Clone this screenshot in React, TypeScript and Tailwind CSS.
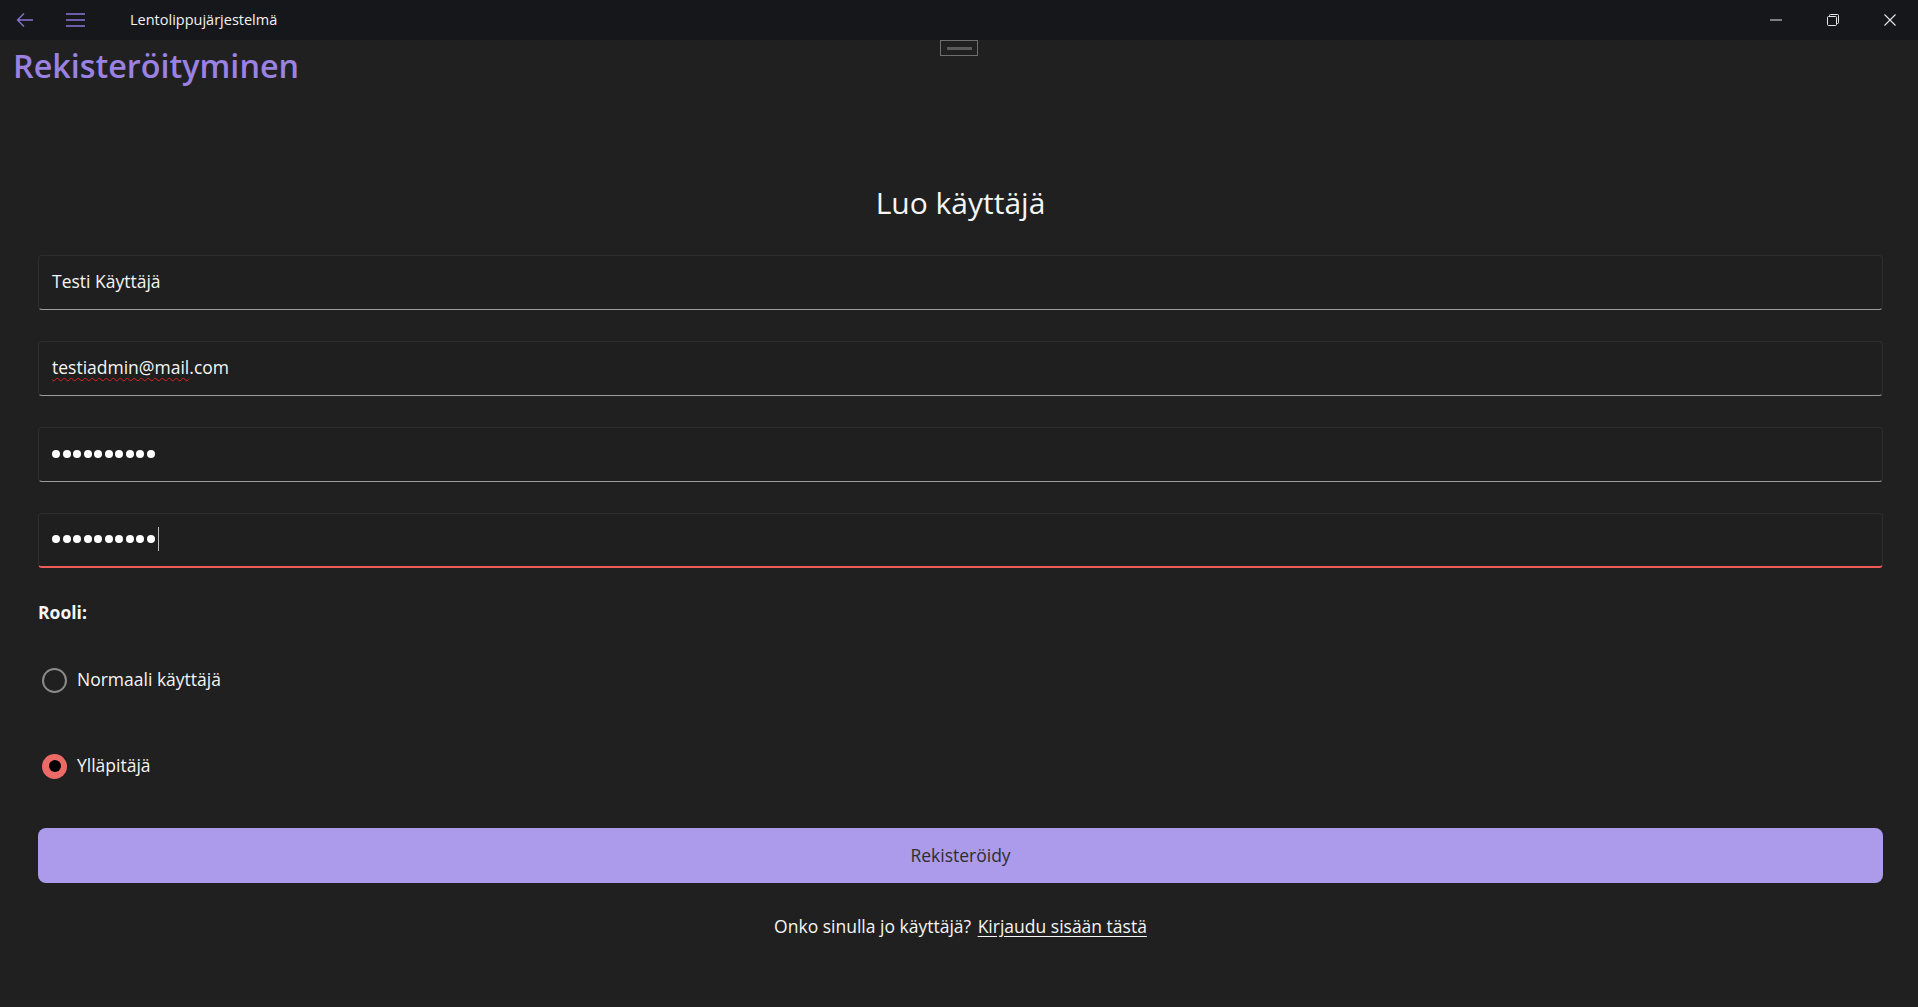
import React from 'react';

const font = { fontFamily: '"Open Sans", "Noto Sans", sans-serif' };

function TitleBar() {
  return (
    <div className="h-[40px] bg-[#16171b] flex items-center text-white shrink-0">
      {/* back arrow */}
      <svg className="ml-[16px]" width="18" height="16" viewBox="0 0 18 16" fill="none" stroke="#8a74d6" strokeWidth="1.3">
        <path d="M17 8H2M8 1.5L1.5 8L8 14.5" />
      </svg>
      {/* hamburger */}
      <svg className="ml-[32px]" width="19" height="14" viewBox="0 0 19 14" fill="none" stroke="#8a74d6" strokeWidth="1.4">
        <path d="M0 1h19M0 7h19M0 13h19" />
      </svg>
      <span className="ml-[45px] text-[14.5px] text-[#f2f2f2]">Lentolippujärjestelmä</span>
      <div className="ml-auto flex items-center h-full">
        <div className="w-[57px] h-full flex items-center justify-center">
          <svg width="12" height="2" viewBox="0 0 12 2"><path d="M0 1h12" stroke="#e6e6e6" strokeWidth="1" /></svg>
        </div>
        <div className="w-[57px] h-full flex items-center justify-center">
          <svg width="12" height="12" viewBox="0 0 12 12" fill="none" stroke="#e6e6e6" strokeWidth="1">
            <rect x="0.5" y="2.5" width="9" height="9" rx="1" />
            <path d="M2.5 2.5V1.5a1 1 0 0 1 1-1h7a1 1 0 0 1 1 1v7a1 1 0 0 1-1 1h-1" />
          </svg>
        </div>
        <div className="w-[57px] h-full flex items-center justify-center">
          <svg width="12" height="12" viewBox="0 0 12 12" fill="none" stroke="#e6e6e6" strokeWidth="1.1">
            <path d="M0.5 0.5l11 11M11.5 0.5l-11 11" />
          </svg>
        </div>
      </div>
    </div>
  );
}

function Field({ children, error }: { children: React.ReactNode; error?: boolean }) {
  return (
    <div
      className={
        'h-[55px] rounded-[4px] bg-[#1f1f1f] border border-[#2e2e2e] flex items-center pl-[13px] pb-[2px] text-[17.5px] text-[#f5f5f5] ' +
        (error ? 'border-b-2 border-b-[#ef5b57]' : 'border-b-[#9c9c9c]')
      }
    >
      {children}
    </div>
  );
}

function Dots({ caret }: { caret?: boolean }) {
  return (
    <div className="flex items-center gap-[2.5px]">
      {Array.from({ length: 10 }).map((_, i) => (
        <span key={i} className="w-[8px] h-[8px] rounded-full bg-white" />
      ))}
      {caret && <span className="w-[1px] h-[24px] bg-[#bdbdbd] ml-[1px]" />}
    </div>
  );
}

export default function App() {
  return (
    <div className="w-[1918px] h-[1007px] bg-[#202020] flex flex-col overflow-hidden relative" style={font}>
      <TitleBar />
      {/* drag handle */}
      <div className="absolute left-[940px] top-[40px] w-[38px] h-[16px] border border-[#6e6e6e] flex items-center justify-center">
        <span className="w-[25px] h-[3px] bg-[#5a5a5a]" />
      </div>

      <h1 className="mt-[5px] ml-[13px] text-[32.3px] leading-[40px] font-semibold text-[#9a82e2]">Rekisteröityminen</h1>

      <div className="pl-[38px] pr-[35px] flex flex-col">
        <h2 className="mt-[99px] text-center text-[30px] leading-[38px] text-[#f5f5f5]">Luo käyttäjä</h2>

        <div className="mt-[33px] flex flex-col gap-[31px]">
          <Field>Testi Käyttäjä</Field>
          <Field>
            <span className="underline decoration-wavy decoration-[#e02020] decoration-1 underline-offset-[3px]">testiadmin@mail</span>
            <span>.com</span>
          </Field>
          <Field>
            <Dots />
          </Field>
          <Field error>
            <Dots caret />
          </Field>
        </div>

        <div className="mt-[32px] text-[17.5px] leading-[24px] font-bold text-[#f5f5f5]">Rooli:</div>

        <div className="mt-[36px] h-[40px] flex items-center">
          <span className="w-[25px] h-[25px] rounded-full border-2 border-[#8a8a8a] ml-[4px]" />
          <span className="ml-[10px] pb-[2px] text-[17.5px] text-[#f5f5f5]">Normaali käyttäjä</span>
        </div>
        <div className="mt-[46px] h-[40px] flex items-center">
          <span className="w-[25px] h-[25px] rounded-full bg-[#ee6a66] ml-[4px] flex items-center justify-center">
            <span className="w-[12px] h-[12px] rounded-full bg-black" />
          </span>
          <span className="ml-[10px] pb-[2px] text-[17.5px] text-[#f5f5f5]">Ylläpitäjä</span>
        </div>

        <button className="mt-[42px] h-[55px] rounded-[8px] bg-[#ac9aea] pb-[1px] text-[17.5px] text-[#2e2e2e]">Rekisteröidy</button>

        <div className="mt-[31px] text-center text-[17.5px] leading-[24px] text-[#f5f5f5]">
          Onko sinulla jo käyttäjä? <span className="ml-[2px] underline underline-offset-[3px]">Kirjaudu sisään tästä</span>
        </div>
      </div>
    </div>
  );
}
